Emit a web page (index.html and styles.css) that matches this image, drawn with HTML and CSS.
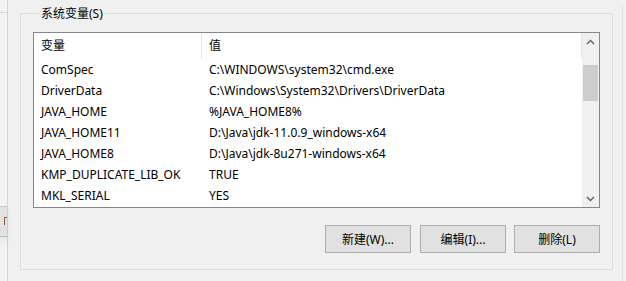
FILE: index.html
```html
<!DOCTYPE html>
<html lang="zh-CN">
<head>
    <meta charset="UTF-8">
    <title>系统变量</title>
    <link rel="stylesheet" href="styles.css">
</head>
<body>
    <div class="screen">
        <div class="behind">
            <div class="behind-top"></div>
            <div class="behind-btn"><span class="mark"></span></div>
        </div>
        <div class="dialog">
            <fieldset class="group">
                <legend>系统变量(S)</legend>
                <div class="list">
                    <div class="list-body">
                        <div class="head">
                            <div class="col1">变量</div>
                            <div class="col2">值</div>
                        </div>
                        <div class="row"><div class="col1">ComSpec</div><div class="col2">C:\WINDOWS\system32\cmd.exe</div></div>
                        <div class="row"><div class="col1">DriverData</div><div class="col2">C:\Windows\System32\Drivers\DriverData</div></div>
                        <div class="row"><div class="col1">JAVA_HOME</div><div class="col2">%JAVA_HOME8%</div></div>
                        <div class="row"><div class="col1">JAVA_HOME11</div><div class="col2">D:\Java\jdk-11.0.9_windows-x64</div></div>
                        <div class="row"><div class="col1">JAVA_HOME8</div><div class="col2">D:\Java\jdk-8u271-windows-x64</div></div>
                        <div class="row"><div class="col1">KMP_DUPLICATE_LIB_OK</div><div class="col2">TRUE</div></div>
                        <div class="row"><div class="col1">MKL_SERIAL</div><div class="col2">YES</div></div>
                    </div>
                    <div class="scrollbar">
                        <div class="arrow">
                            <svg width="9" height="6" viewBox="0 0 9 6"><path d="M1 5 L4.5 1.5 L8 5" fill="none" stroke="#606060" stroke-width="1.4"/></svg>
                        </div>
                        <div class="track">
                            <div class="thumb"></div>
                        </div>
                        <div class="arrow">
                            <svg width="9" height="6" viewBox="0 0 9 6"><path d="M1 1 L4.5 4.5 L8 1" fill="none" stroke="#606060" stroke-width="1.4"/></svg>
                        </div>
                    </div>
                </div>
                <div class="buttons">
                    <button>新建(W)...</button>
                    <button>编辑(I)...</button>
                    <button class="last">删除(L)</button>
                </div>
            </fieldset>
            <div class="edge"></div>
        </div>
    </div>
</body>
</html>
```

FILE: styles.css
```css
*{
    margin: 0;padding: 0;
    box-sizing: border-box;
}
body{
    background-color: #f0f0f0;
    font-family: "Noto Sans", "Noto Sans CJK SC", sans-serif;
    font-size: 12px;
    color: #000;
    overflow: hidden;
}
.screen{
    display: flex;
    width: 626px;
    height: 281px;
}
.behind{
    width: 8px;
    border-right: 1px solid #d4d4d4;
    background-color: #f3f3f3;
    display: flex;
    flex-direction: column;
}
.behind-top{
    height: 13px;
    border-bottom: 1px solid #dadada;
    margin-bottom: 193px;
}
.behind-btn{
    height: 31px;
    background-color: #e2e2e2;
    border-top: 1px solid #c8c8c8;
    border-bottom: 1px solid #b9b9b9;
    box-shadow: 0 4px 6px rgba(0,0,0,0.08);
    padding: 10px 0 0 4px;
}
.mark{
    display: block;
    width: 3px;
    height: 8px;
    border-left: 1px solid #a0522d;
    border-top: 1px solid #a0522d;
}
.dialog{
    flex: 1;
    display: flex;
    padding: 6px 0 0 12px;
}
.group{
    width: 592px;
    height: 264px;
    border: 1px solid #dcdcdc;
    padding: 11px 12px 0 12px;
}
.group legend{
    margin-left: 6px;
    padding: 0 2px;
    line-height: 15px;
    font-size: 12px;
}
.list{
    display: flex;
    width: 567px;
    height: 176px;
    border: 1px solid #828790;
    background-color: #fff;
    overflow: hidden;
}
.list-body{
    flex: 1;
    overflow: hidden;
}
.head, .row{
    display: grid;
    grid-template-columns: 168px 1fr;
}
.head{
    height: 25px;
    line-height: 26px;
    border-right: 1px solid #e5e5e5;
}
.head .col1{
    border-right: 1px solid #e5e5e5;
}
.row{
    height: 21px;
    line-height: 23px;
}
.col1{
    padding-left: 7px;
    white-space: nowrap;
}
.col2{
    padding-left: 7px;
    white-space: nowrap;
}
.scrollbar{
    width: 17px;
    background-color: #f0f0f0;
    display: flex;
    flex-direction: column;
}
.arrow{
    height: 17px;
    display: flex;
    align-items: center;
    justify-content: center;
}
.track{
    flex: 1;
    padding: 15px 1px 0 1px;
}
.thumb{
    height: 36px;
    background-color: #cdcdcd;
}
.buttons{
    display: flex;
    justify-content: flex-end;
    margin-top: 17px;
}
button{
    width: 86px;
    height: 28px;
    margin-left: 9px;
    background-color: #e1e1e1;
    border: 1px solid #adadad;
    font-family: "Noto Sans", "Noto Sans CJK SC", sans-serif;
    font-size: 12px;
    color: #000;
}
button.last{
    margin-left: 8px;
}
.edge{
    width: 1px;
    margin-left: 9px;
    background-color: #e2e2e2;
}
```
